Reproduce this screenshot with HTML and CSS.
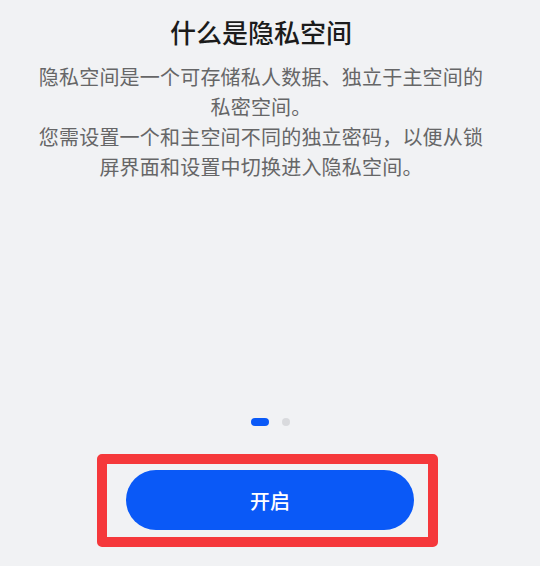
FILE: index.html
```html
<!DOCTYPE html>
<html lang="zh-CN">
<head>
<meta charset="utf-8">
<link rel="stylesheet" href="styles.css">
</head>
<body>
<div class="page">
  <h1 class="title">什么是隐私空间</h1>
  <div class="desc">
    <p>隐私空间是一个可存储私人数据、独立于主空间的私密空间。</p>
    <p>您需设置一个和主空间不同的独立密码，以便从锁屏界面和设置中切换进入隐私空间。</p>
  </div>
  <div class="dots">
    <span class="dot active"></span>
    <span class="dot"></span>
  </div>
  <div class="highlight">
    <button class="btn">开启</button>
  </div>
</div>
</body>
</html>
```

FILE: styles.css
```css
html, body {
  margin: 0;
  padding: 0;
  background: #f1f2f4;
}
.page {
  width: 540px;
  height: 566px;
  display: flex;
  flex-direction: column;
  font-family: "Noto Sans CJK SC", "Noto Sans", sans-serif;
  overflow: hidden;
}
.title {
  margin: 14px 0 0;
  padding: 0 53px 0 35px;
  font-size: 26px;
  line-height: 36px;
  font-weight: 500;
  color: #1b1b1b;
  text-align: center;
}
.desc {
  margin-top: 12px;
  padding: 0 53px 0 35px;
  text-align: center;
  font-size: 20px;
  letter-spacing: 0.2px;
  line-height: 30px;
  color: #666667;
}
.desc p {
  margin: 0;
}
.dots {
  margin-top: 236px;
  display: flex;
  justify-content: center;
  align-items: center;
  gap: 13px;
  height: 8px;
}
.dot {
  width: 8px;
  height: 8px;
  border-radius: 4px;
  background: #d9dadd;
}
.dot.active {
  width: 18px;
  background: #0a59f7;
}
.highlight {
  align-self: flex-start;
  margin: 28px 0 0 97px;
  border: 10px solid #f5383b;
  border-radius: 5px;
  padding: 6px 14px 7px 19px;
  display: flex;
}
.btn {
  width: 288px;
  height: 60px;
  border: none;
  border-radius: 30px;
  background: #0a59f7;
  color: #ffffff;
  font-family: "Noto Sans CJK SC", "Noto Sans", sans-serif;
  font-size: 20px;
  font-weight: 500;
  padding: 0;
  margin: 0;
}
```
